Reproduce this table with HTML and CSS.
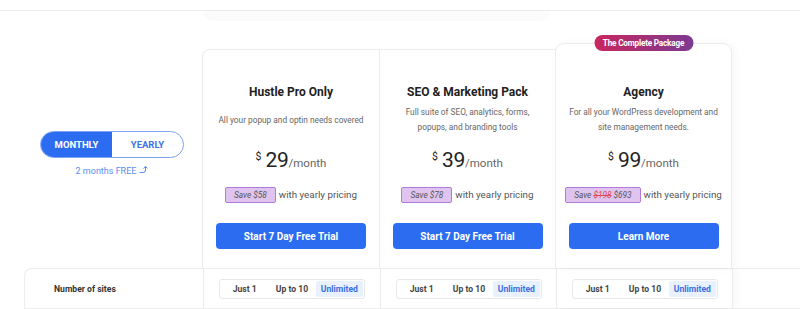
FILE: index.html
```html
<!DOCTYPE html>
<html lang="en">
<head>
<meta charset="utf-8">
<title>Pricing</title>
<link rel="stylesheet" href="styles.css">
</head>
<body>
<div class="topbar"></div>
<div class="ghost"></div>
<main class="pricing">
  <div class="plans">
    <div class="toggle-col">
      <div class="toggle">
        <span class="toggle-opt active">MONTHLY</span>
        <span class="toggle-opt">YEARLY</span>
      </div>
      <div class="free-note">2 months FREE
        <svg class="arrow" width="9" height="9" viewBox="0 0 9 9" fill="none" stroke="#5b8cf0" stroke-width="1" stroke-linecap="round" stroke-linejoin="round"><path d="M1 7.5 H4.5 Q6.5 7.5 6.5 5 V1.5"/><path d="M4.8 3.2 L6.5 1.3 L8.2 3.2"/></svg>
      </div>
    </div>
    <div class="plan plan-first">
      <h2 class="plan-title">Hustle Pro Only</h2>
      <div class="plan-desc"><p>All your popup and optin needs covered</p></div>
      <div class="price"><span class="cur">$</span><span class="amt">29</span><span class="per">/month</span></div>
      <div class="save"><span class="save-tag">Save $58</span> with yearly pricing</div>
      <a class="btn" href="#">Start 7 Day Free Trial</a>
    </div>
    <div class="plan">
      <h2 class="plan-title">SEO &amp; Marketing Pack</h2>
      <div class="plan-desc"><p>Full suite of SEO, analytics, forms,<br>popups, and branding tools</p></div>
      <div class="price"><span class="cur">$</span><span class="amt">39</span><span class="per">/month</span></div>
      <div class="save"><span class="save-tag">Save $78</span> with yearly pricing</div>
      <a class="btn" href="#">Start 7 Day Free Trial</a>
    </div>
    <div class="plan plan-featured">
      <span class="badge">The Complete Package</span>
      <h2 class="plan-title">Agency</h2>
      <div class="plan-desc"><p>For all your WordPress development and<br>site management needs.</p></div>
      <div class="price"><span class="cur">$</span><span class="amt">99</span><span class="per">/month</span></div>
      <div class="save"><span class="save-tag">Save <s>$198</s> $693</span> with yearly pricing</div>
      <a class="btn" href="#">Learn More</a>
    </div>
  </div>
  <div class="features">
    <div class="feat-label">Number of sites</div>
    <div class="feat-cell"><div class="seg"><span>Just 1</span><span>Up to 10</span><span class="on">Unlimited</span></div></div>
    <div class="feat-cell"><div class="seg"><span>Just 1</span><span>Up to 10</span><span class="on">Unlimited</span></div></div>
    <div class="feat-cell feat-last"><div class="seg"><span>Just 1</span><span>Up to 10</span><span class="on">Unlimited</span></div></div>
  </div>
</main>
</body>
</html>
```
FILE: styles.css
```css
* { box-sizing: border-box; }
html, body { margin: 0; padding: 0; }
body {
  width: 800px;
  height: 309px;
  overflow: hidden;
  background: #fff;
  font-family: Roboto, "Liberation Sans", Arial, sans-serif;
  color: #222;
}
.topbar {
  height: 11px;
  border-bottom: 1px solid #ededed;
}
.ghost {
  margin-left: 203px;
  width: 347px;
  height: 10px;
  background: #fbfbfb;
  border-radius: 0 0 18px 18px;
}
.pricing {
  margin-top: 22px;
}
.plans {
  display: grid;
  grid-template-columns: 202px 177px 176px 177px;
  align-items: end;
}
.toggle-col {
  align-self: start;
  padding-top: 88px;
  padding-left: 40px;
  display: flex;
  flex-direction: column;
  align-items: flex-start;
}
.toggle {
  display: flex;
  width: 144px;
  height: 27px;
  border: 1px solid #7fa3f3;
  border-radius: 14px;
  overflow: hidden;
}
.toggle-opt {
  flex: 1;
  display: flex;
  align-items: center;
  justify-content: center;
  font-size: 9.5px;
  font-weight: 700;
  color: #3f74e8;
}
.toggle-opt.active {
  background: #2b6cf0;
  color: #fff;
}
.free-note {
  width: 144px;
  margin-top: 8px;
  text-align: center;
  font-size: 9px;
  color: #5b8cf0;
  display: flex;
  justify-content: center;
  align-items: center;
  gap: 3px;
}
.arrow { margin-top: -4px; }
.plan {
  position: relative;
  height: 219px;
  border-top: 1px solid #ececec;
  border-left: 1px solid #ececec;
  padding: 33px 13px 19px;
  display: flex;
  flex-direction: column;
  align-items: center;
  background: #fff;
}
.plan-first { border-top-left-radius: 8px; }
.plan-featured {
  height: 225px;
  padding-top: 39px;
  border: 1px solid #ececec;
  border-bottom: none;
  border-radius: 9px 9px 0 0;
  box-shadow: 3px 0 10px rgba(0, 0, 0, 0.035);
}
.badge {
  position: absolute;
  top: -9px;
  left: 50%;
  transform: translateX(-50%);
  height: 16px;
  width: 99px;
  border-radius: 8px;
  background: linear-gradient(90deg, #c9265d, #7c3a92);
  color: #fff;
  font-size: 8.2px;
  font-weight: 700;
  letter-spacing: -0.2px;
  display: flex;
  align-items: center;
  justify-content: center;
  white-space: nowrap;
}
.plan-title {
  margin: 0;
  font-size: 12px;
  line-height: 18px;
  font-weight: 700;
  color: #222;
}
.plan-desc {
  margin-top: 3px;
  height: 32px;
  display: flex;
  align-items: center;
  justify-content: center;
}
.plan-desc p {
  margin: 0;
  font-size: 8.3px;
  line-height: 15px;
  color: #666;
  text-align: center;
}
.price {
  margin-top: 11px;
  height: 26px;
  display: flex;
  align-items: baseline;
  line-height: 26px;
}
.cur {
  font-size: 10.5px;
  align-self: flex-start;
  line-height: 14px;
  margin-top: 3px;
  margin-right: 4px;
  color: #222;
}
.amt {
  font-size: 21px;
  color: #222;
  letter-spacing: -0.3px;
}
.per {
  font-size: 11.5px;
  color: #666;
}
.save {
  margin-top: 13px;
  height: 17px;
  display: flex;
  align-items: center;
  gap: 3px;
  font-size: 9.8px;
  color: #555;
  white-space: nowrap;
}
.save-tag {
  height: 16px;
  padding: 0 8px;
  display: inline-flex;
  align-items: center;
  gap: 2px;
  background: #dfc4ef;
  border: 1px solid #b37bd8;
  border-radius: 2px;
  font-style: italic;
  font-size: 8.3px;
  color: #555;
}
.save-tag s { color: #e0464c; }
.btn {
  margin-top: 20px;
  width: 150px;
  height: 26px;
  border-radius: 4px;
  background: #2b6cf0;
  color: #fff;
  font-size: 10px;
  font-weight: 700;
  text-decoration: none;
  display: flex;
  align-items: center;
  justify-content: center;
}
.features {
  margin-left: 24px;
  display: grid;
  grid-template-columns: 178px 177px 176px 177px;
  height: 41px;
  border-top: 1px solid #ececec;
  border-bottom: 1px solid #ececec;
  border-left: 1px solid #ececec;
  border-top-left-radius: 8px;
}
.feat-label {
  padding-left: 29px;
  display: flex;
  align-items: center;
  font-size: 8.6px;
  font-weight: 700;
  color: #333;
}
.feat-cell {
  border-left: 1px solid #ececec;
  display: flex;
  align-items: center;
  padding-left: 15px;
}
.feat-last {
  border-right: 1px solid #ececec;
  box-shadow: 3px 0 10px rgba(0, 0, 0, 0.035);
}
.seg {
  width: 146px;
  height: 20px;
  border: 1px solid #e8e8e8;
  border-radius: 3px;
  padding: 1px;
  display: flex;
  align-items: stretch;
}
.seg span {
  flex: 1;
  display: flex;
  align-items: center;
  justify-content: center;
  font-size: 8.6px;
  font-weight: 700;
  color: #444;
  border-radius: 2px;
}
.seg span.on {
  background: #e9f1fe;
  color: #3b6fe0;
}
```
